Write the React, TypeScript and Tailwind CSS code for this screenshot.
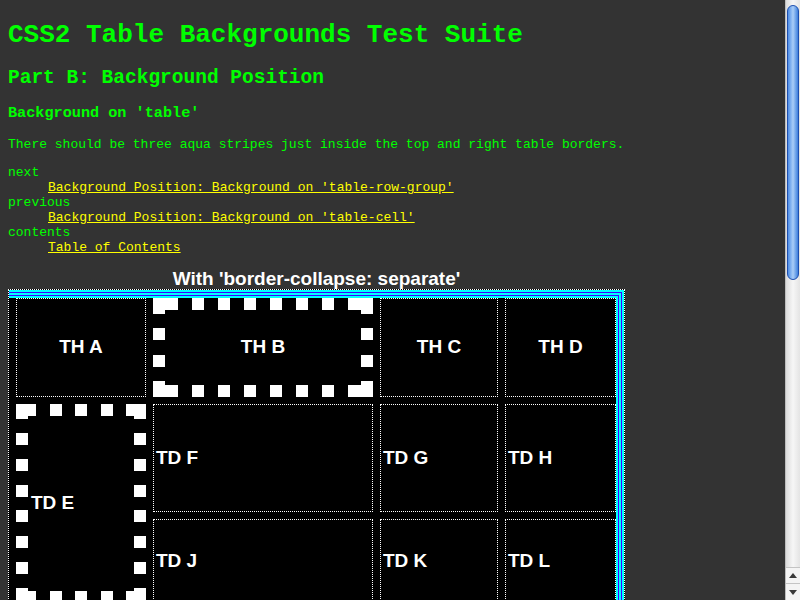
import React from 'react';

const mono = "font-['Liberation_Mono','Courier_New',monospace]";
const sans = "font-['Liberation_Sans',Arial,sans-serif]";

// spread dots evenly between the two corner pieces of one side
const dotsAlong = (len: number, corner: number) => {
  const avail = len - 2 * corner;
  const n = Math.max(0, Math.round((avail - 14) / 26));
  const gap = (avail - 12 * n) / (n + 1);
  return Array.from({ length: n }, (_, i) => corner + gap * (i + 1) + 12 * i);
};

function SquareDots({ w, h, ch, cv }: { w: number; h: number; ch: number; cv: number }) {
  const b = 12;
  const rects: [number, number, number, number][] = [
    [0, 0, ch, b],
    [w - ch, 0, ch, b],
    [0, h - b, ch, b],
    [w - ch, h - b, ch, b],
    [0, 0, b, cv],
    [0, h - cv, b, cv],
    [w - b, 0, b, cv],
    [w - b, h - cv, b, cv],
  ];
  dotsAlong(w, ch).forEach((x) => {
    rects.push([x, 0, b, b]);
    rects.push([x, h - b, b, b]);
  });
  dotsAlong(h, cv).forEach((y) => {
    rects.push([0, y, b, b]);
    rects.push([w - b, y, b, b]);
  });
  return (
    <svg className="absolute inset-0" width={w} height={h} shapeRendering="crispEdges">
      {rects.map(([x, y, rw, rh], i) => (
        <rect key={i} x={Math.round(x)} y={Math.round(y)} width={rw} height={rh} fill="#ffffff" />
      ))}
    </svg>
  );
}

function Cell({ label, head, className = '' }: { label: string; head?: boolean; className?: string }) {
  return (
    <div
      className={`border border-dotted border-white bg-black flex items-center px-[2px] text-white font-bold text-[19px] ${sans} ${
        head ? 'justify-center' : 'justify-start'
      } ${className}`}
    >
      {label}
    </div>
  );
}

function Scrollbar() {
  return (
    <div className="w-[15px] h-[600px] flex flex-col bg-[#ececec] border-l border-[#bdbdbd]">
      <div className="flex-1 pt-[5px] px-px bg-linear-to-r from-[#dcdcdc] via-[#f6f6f6] to-[#e4e4e4]">
        <div className="h-[275px] rounded-full border border-[#1d4fb0] bg-linear-to-r from-[#4d8de6] via-[#a9cdf7] to-[#3d7fdc]" />
      </div>
      <div className="h-[16px] flex items-center justify-center border-t border-[#c4c4c4] bg-[#f4f4f4]">
        <svg width="8" height="5" viewBox="0 0 8 5">
          <path d="M4 0 L8 5 L0 5 Z" fill="#3a3a3a" />
        </svg>
      </div>
      <div className="h-[17px] flex items-center justify-center border-t border-[#c4c4c4] bg-[#f4f4f4]">
        <svg width="8" height="5" viewBox="0 0 8 5">
          <path d="M0 0 L8 0 L4 5 Z" fill="#3a3a3a" />
        </svg>
      </div>
    </div>
  );
}

export default function App() {
  return (
    <div className="w-[800px] h-[600px] overflow-hidden flex bg-[#333333]">
      <div className={`flex-1 px-[8px] text-[#00ff00] ${mono}`}>
        <h1 className="mt-[20px] text-[26px] leading-[30px] font-bold">CSS2 Table Backgrounds Test Suite</h1>
        <h2 className="mt-[17px] text-[19.5px] leading-[22px] font-bold">Part B: Background Position</h2>
        <h3 className="mt-[15px] text-[15.2px] leading-[18px] font-bold">Background on 'table'</h3>
        <p className="mt-[15px] text-[13px] leading-[15px]">
          There should be three aqua stripes just inside the top and right table borders.
        </p>

        <dl className="mt-[13px] text-[13px] leading-[15px]">
          <dt>next</dt>
          <dd className="ml-[40px]">
            <a href="#" className="text-[#ffff00] underline">Background Position: Background on 'table-row-group'</a>
          </dd>
          <dt>previous</dt>
          <dd className="ml-[40px]">
            <a href="#" className="text-[#ffff00] underline">Background Position: Background on 'table-cell'</a>
          </dd>
          <dt>contents</dt>
          <dd className="ml-[40px]">
            <a href="#" className="text-[#ffff00] underline">Table of Contents</a>
          </dd>
        </dl>

        <div className={`mt-[13px] w-[617px] h-[21px] leading-[21px] text-center text-white font-bold text-[19px] ${sans}`}>
          With 'border-collapse: separate'
        </div>

        {/* table: dotted border, aqua stripes along top and right */}
        <div className="w-[617px] border border-dotted border-white bg-black">
          <div className="border-t-2 border-r-2 border-[#00ffff]">
            <div className="border-t border-r border-[#3f00ff]">
              <div className="border-t-2 border-r-2 border-[#00ffff]">
                <div className="border-t border-r border-[#3f00ff]">
                  <div className="border-t-2 border-r-2 border-[#00ffff]">
                    <div className="pl-[7px] pb-[7px] grid grid-cols-[130px_220px_118px_111px] grid-rows-[99px_108px_84px] gap-[7px]">
                      <Cell label="TH A" head />
                      <div className={`relative bg-black flex items-center justify-center text-white font-bold text-[19px] ${sans}`}>
                        <SquareDots w={220} h={99} ch={25} cv={16} />
                        <span className="relative">TH B</span>
                      </div>
                      <Cell label="TH C" head />
                      <Cell label="TH D" head />

                      <div className={`relative row-span-2 bg-black flex items-center pl-[15px] text-white font-bold text-[19px] ${sans}`}>
                        <SquareDots w={130} h={199} ch={20} cv={15} />
                        <span className="relative">TD E</span>
                      </div>
                      <Cell label="TD F" />
                      <Cell label="TD G" />
                      <Cell label="TD H" />

                      <Cell label="TD J" />
                      <Cell label="TD K" />
                      <Cell label="TD L" />
                    </div>
                  </div>
                </div>
              </div>
            </div>
          </div>
        </div>
      </div>
      <Scrollbar />
    </div>
  );
}
